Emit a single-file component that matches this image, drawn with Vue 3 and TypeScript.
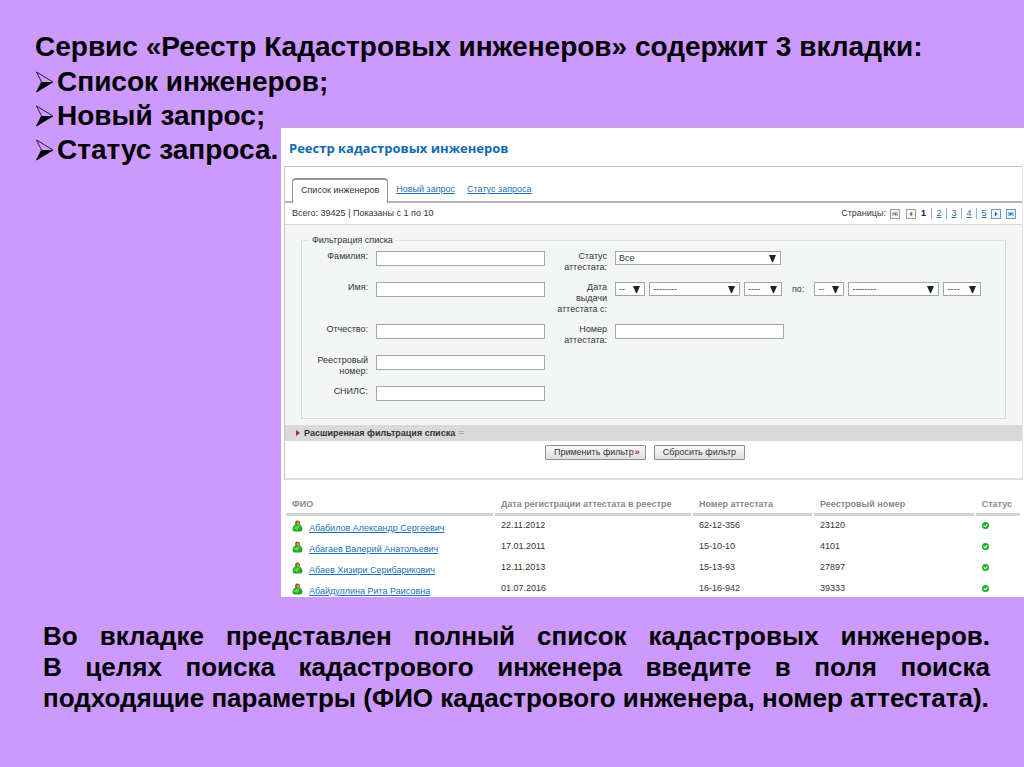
<script setup lang="ts">
import { ref } from 'vue'

interface Engineer {
  name: string
  date: string
  cert: string
  reg: string
}

const tabs: string[] = ['Список инженеров;', 'Новый запрос;', 'Статус запроса.']
const pages: number[] = [2, 3, 4, 5]
const engineers: Engineer[] = [
  { name: 'Абабилов Александр Сергеевич', date: '22.11.2012', cert: '62-12-356', reg: '23120' },
  { name: 'Абагаев Валерий Анатольевич', date: '17.01.2011', cert: '15-10-10', reg: '4101' },
  { name: 'Абаев Хизири Серибарикович', date: '12.11.2013', cert: '15-13-93', reg: '27897' },
  { name: 'Абайдуллина Рита Раисовна', date: '01.07.2016', cert: '16-16-942', reg: '39333' },
]
const dateParts = [
  { kind: 'day', text: '--', label: 'День' },
  { kind: 'month', text: '--------', label: 'Месяц' },
  { kind: 'year', text: '----', label: 'Год' },
]
const surname = ref('')
const firstName = ref('')
const patronymic = ref('')
const regNumber = ref('')
const snils = ref('')
const certNumber = ref('')
</script>

<template>
  <main class="slide">
    <section class="intro">
      <h1>Сервис «Реестр Кадастровых инженеров» содержит 3 вкладки:</h1>
      <ul>
        <li v-for="t in tabs" :key="t">
          <svg class="bullet" viewBox="0 0 18 22" aria-hidden="true">
            <path d="M1 1 L17.500 11 L1 21 L6 11 Z" fill="none" stroke="#000" stroke-width="0.8" />
            <path d="M6 11 L17.500 11 L1 21 Z" fill="#000" />
          </svg>{{ t }}
        </li>
      </ul>
    </section>

    <section class="panel">
      <h2>Реестр кадастровых инженеров</h2>
      <div class="box">
        <nav class="tabs">
          <a class="tab active" href="#list">Список инженеров</a>
          <a class="tab" href="#new">Новый запрос</a>
          <a class="tab" href="#status">Статус запроса</a>
        </nav>
        <div class="summary">
          <span>Всего: 39425 | Показаны с 1 по 10</span>
          <div class="pager">
            <span class="pager-label">Страницы:</span>
            <button class="step off first" type="button" aria-label="Первая страница">
              <svg viewBox="0 0 10 10"><path d="M2.500 2.500V7.500M7.500 2.500V7.500" stroke="currentColor" /><path d="M6.500 2.500V7.500L3 5Z" fill="currentColor" /></svg>
            </button>
            <button class="step off" type="button" aria-label="Предыдущая страница">
              <svg viewBox="0 0 10 10"><path d="M6.500 2V8L3 5Z" fill="currentColor" /></svg>
            </button>
            <b class="page current">1</b>
            <a v-for="p in pages" :key="p" class="page" href="#page"><span>{{ p }}</span></a>
            <button class="step" type="button" aria-label="Следующая страница">
              <svg viewBox="0 0 10 10"><path d="M3.500 2V8L7 5Z" fill="currentColor" /></svg>
            </button>
            <button class="step last" type="button" aria-label="Последняя страница">
              <svg viewBox="0 0 10 10"><path d="M2.500 2.500V7.500M7.500 2.500V7.500" stroke="currentColor" /><path d="M3.500 2.500V7.500L7 5Z" fill="currentColor" /></svg>
            </button>
          </div>
        </div>

        <form @submit.prevent>
          <div class="filter">
            <fieldset>
              <legend>Фильтрация списка</legend>
              <div class="fields">
                <label for="surname">Фамилия:</label>
                <input id="surname" v-model="surname" type="text">
                <label for="state">Статус аттестата:</label>
                <div class="controls">
                  <span class="pick wide">
                    <select id="state"><option>Все</option></select>
                    <svg viewBox="0 0 7 7" aria-hidden="true"><path d="M0 0H7L4 7H3Z" fill="#222" /></svg>
                  </span>
                </div>

                <label for="first">Имя:</label>
                <input id="first" v-model="firstName" type="text">
                <label for="from-day">Дата выдачи аттестата с:</label>
                <div class="controls">
                  <span v-for="d in dateParts" :key="d.kind" class="pick" :class="d.kind">
                    <select :id="'from-' + d.kind" :aria-label="d.label + ' с'"><option>{{ d.text }}</option></select>
                    <svg viewBox="0 0 7 7" aria-hidden="true"><path d="M0 0H7L4 7H3Z" fill="#222" /></svg>
                  </span>
                  <label class="until" for="to-day">по:</label>
                  <span v-for="d in dateParts" :key="'to' + d.kind" class="pick" :class="d.kind">
                    <select :id="'to-' + d.kind" :aria-label="d.label + ' по'"><option>{{ d.text }}</option></select>
                    <svg viewBox="0 0 7 7" aria-hidden="true"><path d="M0 0H7L4 7H3Z" fill="#222" /></svg>
                  </span>
                </div>

                <label for="patronymic">Отчество:</label>
                <input id="patronymic" v-model="patronymic" type="text">
                <label for="cert">Номер аттестата:</label>
                <input id="cert" v-model="certNumber" type="text">

                <label for="reg">Реестровый номер:</label>
                <input id="reg" v-model="regNumber" class="solo" type="text">

                <label for="snils">СНИЛС:</label>
                <input id="snils" v-model="snils" class="solo" type="text">
              </div>
            </fieldset>
          </div>
          <button class="expand" type="button">
            <svg class="mark" viewBox="0 0 4 6" aria-hidden="true"><path d="M0 0L4 3L0 6Z" fill="#c8202c" /></svg>
            Расширенная фильтрация списка
            <svg class="lines" viewBox="0 0 5 4" aria-hidden="true"><path d="M0 .5H5M0 2.500H5" stroke="#aaa" /></svg>
          </button>
          <div class="actions">
            <button class="apply" type="submit">Применить фильтр<span>»</span></button>
            <button class="reset" type="reset">Сбросить фильтр</button>
          </div>
        </form>
      </div>

      <table>
        <colgroup>
          <col class="c-name"><col class="c-date"><col class="c-cert"><col class="c-reg"><col>
        </colgroup>
        <thead>
          <tr>
            <th>ФИО</th>
            <th>Дата регистрации аттестата в реестре</th>
            <th>Номер аттестата</th>
            <th>Реестровый номер</th>
            <th>Статус</th>
          </tr>
        </thead>
        <tbody>
          <tr v-for="e in engineers" :key="e.reg">
            <td>
              <div class="person">
                <svg viewBox="0 0 11 12" aria-hidden="true">
                  <path d="M0.500 8.500Q1 6 3 4.500L5.500 3L8 4.500Q10 6 10.500 8.500Q10.500 11 8.500 11.500H2.500Q.5 11 .5 8.500Z" fill="#27a52c" />
                  <path d="M1.500 8.500Q3.500 5 8 5.500L5.500 10Z" fill="#54dc38" />
                  <path d="M3.200 4Q2.500 .8 5.500 .5Q8.500 .8 7.900 4L5.500 5Z" fill="#7d6a22" />
                  <circle cx="6" cy="3.400" r="1.300" fill="#d9955a" />
                </svg>
                <a href="#engineer">{{ e.name }}</a>
              </div>
            </td>
            <td>{{ e.date }}</td>
            <td>{{ e.cert }}</td>
            <td>{{ e.reg }}</td>
            <td>
              <svg class="ok" viewBox="0 0 7 7" role="img" aria-label="Действует">
                <circle cx="3.500" cy="3.500" r="3.500" fill="#1fae2c" />
                <path d="M1.700 3.300L3.200 4.800L5.300 2.300" fill="none" stroke="#fff" stroke-width="1.100" />
              </svg>
            </td>
          </tr>
        </tbody>
      </table>
    </section>

    <p class="note">
      <span>Во вкладке представлен полный список кадастровых инженеров.</span>
      В целях поиска кадастрового инженера введите в поля поиска подходящие параметры (ФИО кадастрового инженера, номер аттестата).
    </p>
  </main>
</template>

<style>
body {
  margin: 0;
  background: #cc99ff;
}
</style>

<style scoped>
* {
  box-sizing: border-box;
}
.slide {
  min-height: 100vh;
  background: #cc99ff;
  color: #000;
  font-family: "Liberation Sans", Arial, sans-serif;
  overflow: hidden;
}
.intro {
  padding: 30px 0 0 35px;
  font-size: 28px;
  line-height: 34px;
  font-weight: bold;
}
h1 {
  margin: 0;
  font-size: inherit;
}
ul {
  margin: 1px 0 0;
  padding: 0;
  list-style: none;
}
li {
  display: flex;
  align-items: center;
  gap: 3px;
}
.bullet {
  width: 19px;
  height: 22px;
}
.panel {
  position: relative;
  margin: -40px 0 0 281px;
  padding-left: 3px;
  background: #fff;
  border-top: 1px solid #b9b0c4;
  color: #333;
  font-size: 9px;
  line-height: 11px;
}
h2 {
  margin: 0;
  padding: 11px 5px 8px;
  font: bold 13px/19px "Open Sans", "Noto Sans", sans-serif;
  color: #0f6ab0;
}
.box {
  margin-right: 1px;
  border: 1px solid #c4c4c4;
  border-right-color: #e4e4e4;
  border-bottom: 2px solid #dcdcdc;
}
a {
  color: #1c6fb5;
}
.tabs {
  display: flex;
  align-items: flex-end;
  gap: 12px;
  padding: 11px 7px 0;
  border-bottom: 2px solid #b5b5b5;
}
.tab {
  padding: 6px 0;
}
.tab.active {
  margin: 0 -4px -2px 0;
  padding: 5px 8px 7px;
  border: 1px solid #8d939b;
  border-top-width: 2px;
  border-bottom: 0;
  border-radius: 4px 4px 0 0;
  background: #fff;
  color: #333;
  text-decoration: none;
}
.summary {
  display: flex;
  justify-content: space-between;
  align-items: center;
  height: 22px;
  padding: 0 6px 0 7px;
  border-bottom: 1px solid #d5d5d5;
}
.pager {
  display: flex;
  align-items: center;
}
.pager-label {
  margin-right: 4px;
}
.step {
  display: block;
  width: 10px;
  height: 10px;
  padding: 0;
  border: 1px solid #6a9ac6;
  background: #eef5fb;
  color: #1c6fb5;
}
.step svg {
  display: block;
  width: 8px;
  height: 8px;
}
.step.off {
  border-color: #a0a09a;
  background: #f4f4f0;
  color: #77776f;
}
.step.first {
  margin-right: 6px;
}
.step.last {
  margin-left: 5px;
}
.page {
  width: 15px;
  text-align: center;
  border-left: 1px solid #9ab2c8;
}
.page.current {
  border-left: 0;
  color: #14144a;
}
.filter {
  padding: 10px 16px 6px;
  background: #f4f6f6;
}
fieldset {
  min-width: 0;
  margin: 0;
  padding: 5px 0 10px;
  border: 1px solid #d4d8d8;
  border-top-color: #e2e5e5;
}
legend {
  margin-left: 7px;
  padding: 0 3px;
}
.fields {
  display: grid;
  grid-template-columns: 66px 169px 54px 1fr;
  grid-auto-rows: minmax(22px, auto);
  gap: 9px 8px;
}
.fields label {
  padding-left: 2px;
  text-align: right;
}
input,
select {
  font: inherit;
  color: #333;
  background: #fff;
  border: 1px solid #a3a7ab;
  border-radius: 0;
}
input {
  width: 169px;
  height: 15px;
  padding: 0 3px;
}
.solo {
  grid-column: 2 / -1;
}
.controls {
  display: flex;
  align-items: flex-start;
  gap: 4px;
}
.pick {
  display: grid;
  align-items: center;
}
.pick select,
.pick svg {
  grid-area: 1 / 1;
}
.pick select {
  width: 100%;
  height: 14px;
  padding: 0 3px;
  appearance: none;
}
.pick svg {
  justify-self: end;
  width: 7px;
  height: 7px;
  margin-right: 5px;
  pointer-events: none;
}
.wide {
  width: 166px;
}
.day {
  width: 30px;
}
.month {
  width: 91px;
}
.year {
  width: 38px;
}
.fields .until {
  padding: 2px 6px;
}
.expand {
  display: flex;
  align-items: center;
  gap: 4px;
  width: 100%;
  height: 16px;
  padding: 0 11px;
  border: 0;
  background: #d9d9d9;
  color: #333;
  font: bold 9px/11px "Liberation Sans", Arial, sans-serif;
}
.mark {
  width: 4px;
  height: 6px;
}
.lines {
  width: 5px;
  height: 4px;
}
.actions {
  display: flex;
  justify-content: center;
  gap: 8px;
  padding: 4px 17px 18px 0;
}
.actions button {
  height: 15px;
  padding: 0 8px;
  border: 1px solid #8f8f8f;
  border-radius: 1px;
  background: linear-gradient(#fafafa, #dedede);
  color: #333;
  font: 9px/11px "Liberation Sans", Arial, sans-serif;
}
.actions .apply {
  padding-right: 5px;
}
.apply span {
  margin-left: 1px;
  color: #d0202c;
  font-weight: bold;
}
table {
  width: 100%;
  margin-top: 13px;
  padding-right: 2px;
  border-collapse: separate;
  border-spacing: 2px 0;
  table-layout: fixed;
}
.c-name {
  width: 28.5%;
}
.c-date {
  width: 27%;
}
.c-cert {
  width: 16.4%;
}
.c-reg {
  width: 22%;
}
th {
  padding: 6px 0 3px 6px;
  border-bottom: 3px solid #d2d2d2;
  color: #8a8a8a;
  text-align: left;
  white-space: nowrap;
}
td {
  height: 21px;
  padding: 4px 0 0 6px;
  vertical-align: top;
}
tr:last-child td {
  height: 18px;
}
.person {
  display: flex;
  align-items: flex-end;
  gap: 6px;
  height: 14px;
  white-space: nowrap;
}
.person svg {
  align-self: flex-start;
  width: 11px;
  height: 12px;
}
.ok {
  display: block;
  width: 7px;
  height: 7px;
  margin-top: 2px;
}
.note {
  margin: 24px 34px 0 43px;
  font-size: 26px;
  line-height: 31px;
  font-weight: bold;
  text-align: justify;
}
.note span {
  display: block;
  text-align-last: justify;
}
</style>
